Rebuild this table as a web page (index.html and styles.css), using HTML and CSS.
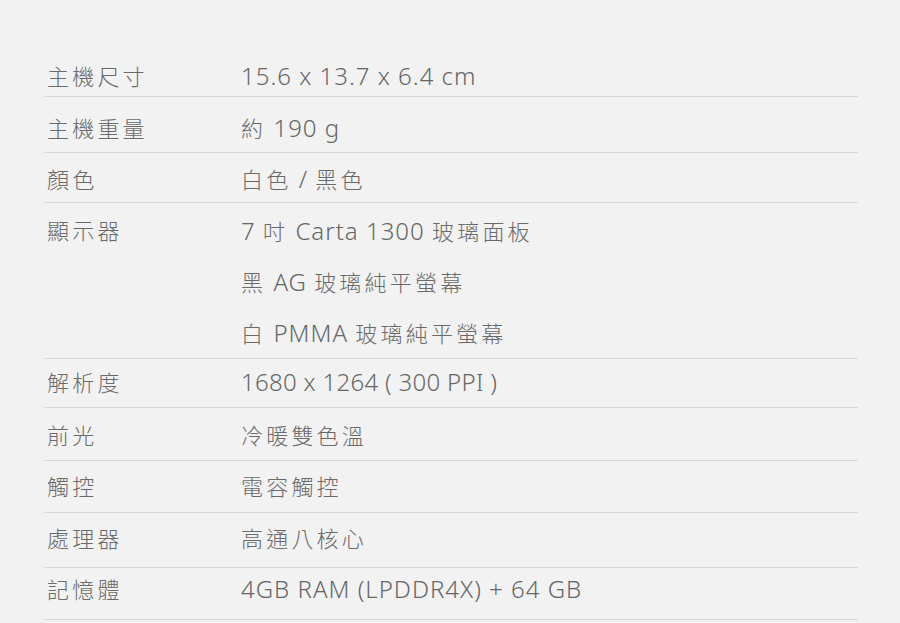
FILE: index.html
```html
<!DOCTYPE html>
<html lang="zh-Hant">
<head>
<meta charset="utf-8">
<link rel="stylesheet" href="styles.css">
</head>
<body>
<div class="specs">
  <div class="row r1"><div class="label">主機尺寸</div><div class="value">15.6 x 13.7 x 6.4 cm</div></div>
  <div class="row r2"><div class="label">主機重量</div><div class="value"><span class="cjk">約</span> 190 g</div></div>
  <div class="row r3"><div class="label">顏色</div><div class="value"><span class="cjk">白色</span> / <span class="cjk">黑色</span></div></div>
  <div class="row r4"><div class="label">顯示器</div><div class="value multi"><div class="line">7 <span class="cjk">吋</span> Carta 1300 <span class="cjk">玻璃面板</span></div><div class="line"><span class="cjk">黑</span> AG <span class="cjk">玻璃純平螢幕</span></div><div class="line"><span class="cjk">白</span> PMMA <span class="cjk">玻璃純平螢幕</span></div></div></div>
  <div class="row r5"><div class="label">解析度</div><div class="value cond">1680 x 1264 ( 300 PPI )</div></div>
  <div class="row r6"><div class="label">前光</div><div class="value cjk">冷暖雙色溫</div></div>
  <div class="row r7"><div class="label">觸控</div><div class="value cjk">電容觸控</div></div>
  <div class="row r8"><div class="label">處理器</div><div class="value cjk">高通八核心</div></div>
  <div class="row r9"><div class="label">記憶體</div><div class="value">4GB RAM (LPDDR4X) + 64 GB</div></div>
</div>
</body>
</html>
```
FILE: styles.css
```css
html, body {
  margin: 0;
  padding: 0;
  background: #f2f2f2;
}
body {
  font-family: "Noto Sans", "Noto Sans CJK TC", sans-serif;
  font-size: 24px;
  font-weight: 300;
  color: #666;
  letter-spacing: 1px;
  padding: 44px 42px 0 44px;
}
.specs {
  display: flex;
  flex-direction: column;
}
.row {
  display: flex;
  align-items: flex-start;
  box-sizing: border-box;
  border-bottom: 1px solid #d9d9d9;
}
.label {
  width: 194px;
  padding-left: 3px;
  line-height: 26px;
  flex: none;
  font-size: 22px;
  letter-spacing: 3.2px;
  color: #6a6a6a;
}
.value {
  line-height: 26px;
}
.cjk {
  font-size: 22px;
  letter-spacing: 3.2px;
  color: #6a6a6a;
}
.multi .line {
  line-height: 51px;
  height: 51px;
}
.cond {
  letter-spacing: 0.3px;
}
.r1 { height: 53px; padding-top: 19px; }
.r2 { height: 56px; padding-top: 18px; }
.r3 { height: 50px; padding-top: 13px; }
.r4 { height: 156px; padding-top: 14px; }
.r4 .multi { margin-top: -12px; }
.r5 { height: 49px; padding-top: 10px; }
.r6 { height: 53px; padding-top: 14px; }
.r7 { height: 52px; padding-top: 12px; }
.r8 { height: 55px; padding-top: 12px; }
.r9 { height: 52px; padding-top: 8px; }
```
